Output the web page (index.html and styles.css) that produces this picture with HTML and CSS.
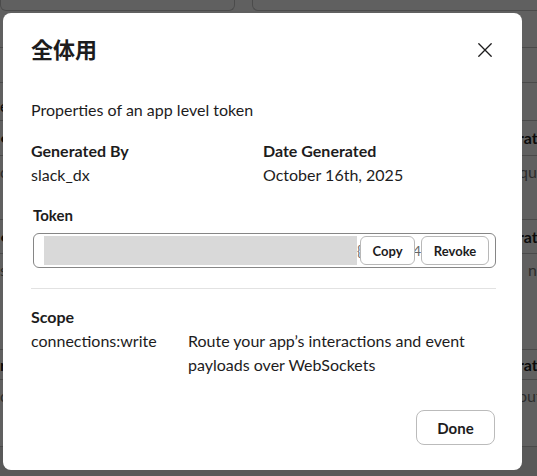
FILE: index.html
```html
<!DOCTYPE html>
<html>
<head>
<meta charset="utf-8">
<link rel="stylesheet" href="styles.css">
</head>
<body>
<div class="page">
  <div class="top-cards">
    <div class="card"></div>
    <div class="card"></div>
  </div>
  <div class="bg-row r37"></div>
  <div class="bg-row r35"></div>
  <div class="bg-row r38"><span class="frag-l at-end">e</span></div>
  <div class="bg-row r35 mid"><span class="frag-l bold">•</span><span class="frag-r bold">rat</span></div>
  <div class="bg-row r64"><span class="frag-l muted">c</span><span class="frag-r muted">qu</span></div>
  <div class="bg-row r34 mid"><span class="frag-l bold">•</span><span class="frag-r bold">rat</span></div>
  <div class="bg-row r96"><span class="frag-l muted">s</span><span class="frag-r muted">n</span></div>
  <div class="bg-row r30 mid"><span class="frag-l bold">r</span><span class="frag-r bold">rat</span></div>
  <div class="bg-row r67"><span class="frag-l muted">c</span><span class="frag-r muted">out</span></div>
  <div class="bg-foot"></div>
</div>

<div class="overlay"></div>

<div class="modal" role="dialog">
  <div class="modal-header">
    <h1 class="modal-title">全体用</h1>
    <button class="close-btn" aria-label="Close">
      <svg width="14" height="14" viewBox="0 0 14 14"><path d="M0.8 0.8 L13.2 13.2 M13.2 0.8 L0.8 13.2" stroke="#1d1c1d" stroke-width="1.3" fill="none" stroke-linecap="round"/></svg>
    </button>
  </div>
  <div class="modal-body">
    <p class="intro">Properties of an app level token</p>
    <div class="meta">
      <div class="meta-item">
        <div class="label">Generated By</div>
        <div class="value">slack_dx</div>
      </div>
      <div class="meta-item">
        <div class="label">Date Generated</div>
        <div class="value">October 16th, 2025</div>
      </div>
    </div>
    <div class="token-label">Token</div>
    <div class="token-field">
      <div class="token-value"><span class="token-mask"></span><span class="token-tail">{</span></div>
      <button class="small-btn copy">Copy</button>
      <span class="token-gap">4</span>
      <button class="small-btn revoke">Revoke</button>
    </div>
    <hr class="divider">
    <div class="label">Scope</div>
    <div class="scope-row">
      <div class="scope-name">connections:write</div>
      <div class="scope-desc">Route your app’s interactions and event payloads over WebSockets</div>
    </div>
  </div>
  <div class="modal-footer">
    <button class="done-btn">Done</button>
  </div>
</div>
</body>
</html>
```

FILE: styles.css
```css
* { box-sizing: border-box; }
html, body { margin: 0; padding: 0; }
body {
  width: 537px;
  height: 476px;
  overflow: hidden;
  font-family: Lato, "Noto Sans CJK JP", sans-serif;
  color: #1d1c1d;
  background: #fff;
  position: relative;
}

/* underlying page (dimmed) */
.page {
  width: 537px;
  height: 476px;
  display: flex;
  flex-direction: column;
}
.top-cards {
  display: flex;
  gap: 17px;
  height: 11px;
  flex: none;
}
.card {
  flex: 0 0 235px;
  border: 1px solid #c8c8c8;
  border-top: none;
  border-radius: 0 0 6px 6px;
}
.card + .card { flex: 1; border-right: none; border-radius: 0 0 0 6px; }
.bg-row {
  flex: none;
  border-bottom: 1px solid #c4c4c4;
  display: flex;
  align-items: flex-start;
  justify-content: space-between;
  font-size: 16px;
  line-height: 20px;
  padding-top: 6px;
}
.bg-row.mid { align-items: center; padding-top: 0; }
.r37 { height: 37px; }
.r35 { height: 35px; }
.r38 { height: 38px; }
.r64 { height: 64px; }
.r34 { height: 34px; }
.r96 { height: 96px; }
.r30 { height: 30px; }
.r67 { height: 67px; }
.frag-l { width: 8px; overflow: hidden; }
.frag-r { width: 19px; overflow: hidden; text-align: right; }
.at-end { align-self: flex-end; margin-bottom: 4px; }
.bold { font-weight: 700; color: #1d1c1d; }
.muted { color: #777; }
.bg-foot { flex: 1; background: #ececec; }

.overlay {
  position: absolute;
  inset: 0;
  background: rgba(0, 0, 0, 0.625);
}

/* modal */
.modal {
  position: absolute;
  left: 3px;
  top: 13px;
  width: 519px;
  height: 457px;
  background: #fff;
  border-radius: 8px;
  display: flex;
  flex-direction: column;
  padding: 0 26px 0 28px;
}
.modal-header {
  display: flex;
  align-items: center;
  justify-content: space-between;
  height: 72px;
  flex: none;
}
.modal-title {
  margin: 0;
  font-size: 22px;
  font-weight: 700;
  font-family: "Noto Sans CJK JP", Lato, sans-serif;
  line-height: 28px;
  margin-top: -3px;
}
.close-btn {
  border: none;
  background: none;
  padding: 0;
  margin-right: 4px;
  margin-top: 2px;
  width: 14px;
  height: 14px;
  display: flex;
}
.modal-body {
  font-size: 16px;
  line-height: 24px;
  padding-top: 13px;
}
.intro { margin: 0 0 17px; }
.meta {
  display: flex;
  margin-bottom: 17px;
}
.meta-item { width: 232px; }
.label { font-weight: 700; }
.token-label {
  font-weight: 700;
  font-size: 15px;
  line-height: 22px;
  padding-left: 2px;
  margin-bottom: 7px;
}
.token-field {
  margin-left: 2px;
  height: 35px;
  border: 1px solid #868686;
  border-radius: 6px;
  display: flex;
  align-items: center;
  padding: 0 6px 0 10px;
  overflow: hidden;
}
.token-value {
  flex: none;
  width: 316px;
  height: 29px;
  display: flex;
  align-items: center;
  overflow: hidden;
}
.token-mask {
  display: block;
  width: 313px;
  height: 29px;
  background: #d9d9d9;
  flex: none;
}
.token-tail, .token-gap {
  font-size: 14px;
  color: #666;
  overflow: hidden;
  flex: none;
}
.token-tail { width: 3px; }
.token-gap { width: 6px; text-align: center; direction: rtl; }
.small-btn {
  flex: none;
  font-family: Lato, sans-serif;
  font-size: 13px;
  font-weight: 700;
  color: #1d1c1d;
  background: #fff;
  border: 1px solid #b8b8b8;
  border-radius: 6px;
  height: 29px;
  padding: 0;
}
.copy { width: 55px; }
.revoke { width: 68px; }
.divider {
  border: none;
  border-top: 1px solid #e2e2e2;
  margin: 20px 0 16px;
}
.scope-row { display: flex; }
.scope-name { width: 157px; flex: none; }
.scope-desc { flex: 1; padding-right: 10px; }
.modal-footer {
  margin-top: auto;
  display: flex;
  justify-content: flex-end;
  padding-bottom: 25px;
  flex: none;
}
.done-btn {
  font-family: Lato, sans-serif;
  font-size: 15px;
  font-weight: 700;
  color: #1d1c1d;
  background: #fff;
  border: 1px solid #bbb;
  border-radius: 8px;
  width: 79px;
  height: 35px;
  margin-right: 1px;
}
```
